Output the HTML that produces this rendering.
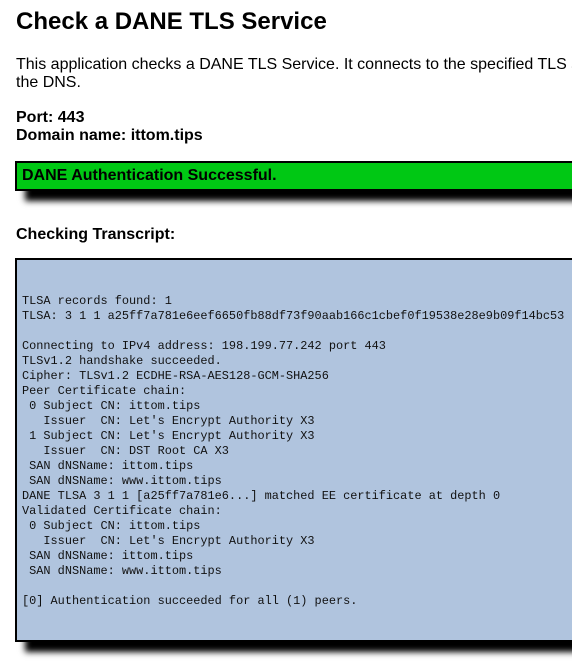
<!DOCTYPE html>
<html><head><style>
body{margin:0;width:572px;height:665px;overflow:hidden;background:#fff;font-family:"Liberation Sans",Arial,sans-serif;color:#000}
h1{position:absolute;left:16px;top:8px;margin:0;font-size:24px;font-weight:bold;white-space:nowrap}
.p{position:absolute;left:16px;top:56px;font-size:16px;line-height:18px;white-space:nowrap}
.b{position:absolute;left:16px;font-size:16px;font-weight:bold}
.ok{position:absolute;left:15px;top:161px;width:600px;height:26px;background:#00c814;border:2px solid #000;box-shadow:10px 10px 6px #000;font-size:16px;font-weight:bold;line-height:26px;padding-left:5px;box-sizing:content-box}
.tr{position:absolute;left:15px;top:258px;width:600px;height:380px;background:#b0c4de;border:2px solid #000;box-shadow:10px 10px 6px #000}
pre{position:absolute;left:22px;top:294px;margin:0;font-family:"Liberation Mono",monospace;font-size:11.9px;line-height:15px;color:#111}
</style></head><body>
<h1>Check a DANE TLS Service</h1>
<div class="p">This application checks a DANE TLS Service. It connects to the specified TLS service and checks the TLSA records in<br>the DNS.</div>
<div class="b" style="top:109px">Port: 443</div>
<div class="b" style="top:127px">Domain name: ittom.tips</div>
<div class="ok">DANE Authentication Successful.</div>
<div class="b" style="top:226px">Checking Transcript:</div>
<div class="tr"></div>
<pre>TLSA records found: 1
TLSA: 3 1 1 a25ff7a781e6eef6650fb88df73f90aab166c1cbef0f19538e28e9b09f14bc53

Connecting to IPv4 address: 198.199.77.242 port 443
TLSv1.2 handshake succeeded.
Cipher: TLSv1.2 ECDHE-RSA-AES128-GCM-SHA256
Peer Certificate chain:
 0 Subject CN: ittom.tips
   Issuer  CN: Let's Encrypt Authority X3
 1 Subject CN: Let's Encrypt Authority X3
   Issuer  CN: DST Root CA X3
 SAN dNSName: ittom.tips
 SAN dNSName: www.ittom.tips
DANE TLSA 3 1 1 [a25ff7a781e6...] matched EE certificate at depth 0
Validated Certificate chain:
 0 Subject CN: ittom.tips
   Issuer  CN: Let's Encrypt Authority X3
 SAN dNSName: ittom.tips
 SAN dNSName: www.ittom.tips

[0] Authentication succeeded for all (1) peers.</pre>
</body></html>
